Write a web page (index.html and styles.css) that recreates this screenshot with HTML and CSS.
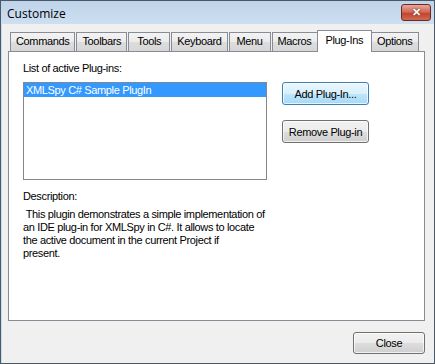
FILE: index.html
```html
<!DOCTYPE html>
<html lang="en">
<head>
  <meta charset="UTF-8">
  <title>Customize</title>
  <link rel="stylesheet" href="styles.css">
</head>
<body>
  <div class="window">
    <div class="titlebar">
      <span class="title">Customize</span>
      <button class="close-x">&#x2715;</button>
    </div>

    <div class="client">
      <div class="tabs">
        <div class="tab">Commands</div>
        <div class="tab">Toolbars</div>
        <div class="tab">Tools</div>
        <div class="tab">Keyboard</div>
        <div class="tab">Menu</div>
        <div class="tab">Macros</div>
        <div class="tab active">Plug-Ins</div>
        <div class="tab">Options</div>
      </div>

      <div class="panel">
        <div class="label">List of active Plug-ins:</div>
        <div class="row">
          <div class="listbox">
            <div class="item selected">XMLSpy C# Sample PlugIn</div>
          </div>
          <div class="side-buttons">
            <button class="btn default">Add Plug-In...</button>
            <button class="btn">Remove Plug-in</button>
          </div>
        </div>

        <div class="label desc-label">Description:</div>
        <div class="desc">&nbsp;This plugin demonstrates a simple implementation of an IDE plug-in for XMLSpy in C#. It allows to locate the active document in the current Project if<br>present.</div>
      </div>

      <div class="footer">
        <button class="btn close-btn">Close</button>
      </div>
    </div>
  </div>
</body>
</html>
```

FILE: styles.css
```css
* {
  box-sizing: border-box;
}

body {
  margin: 0;
  background-color: #ffffff;
  font-family: 'Liberation Sans', Arial, sans-serif;
  font-size: 11px;
  letter-spacing: -0.35px;
  color: #000000;
}

.window {
  width: 435px;
  height: 364px;
  border: 1px solid #4b5866;
  background-color: #c9dbee;
  display: flex;
  flex-direction: column;
}

.titlebar {
  height: 23px;
  display: flex;
  align-items: center;
  justify-content: space-between;
  padding: 0 3px 0 6px;
  background: linear-gradient(#bfd4ea, #cddff1);
}

.title {
  font-family: 'Open Sans', 'Noto Sans', sans-serif;
  font-size: 12px;
  letter-spacing: 0;
  margin-top: 2px;
}

.close-x {
  width: 30px;
  height: 17px;
  margin-top: -1px;
  border: 1px solid #6d2a22;
  border-radius: 3px;
  background: linear-gradient(#e9a99b, #d0634f 50%, #c0402c 51%, #d06b52);
  color: #ffffff;
  font-size: 11px;
  font-weight: bold;
  line-height: 13px;
  padding: 0;
  text-shadow: 0 0 2px #5a1a10;
}

.client {
  flex: 1;
  margin-left: 1px;
  background-color: #f0f0f0;
  padding: 6px 9px 0 6px;
  display: flex;
  flex-direction: column;
}

.tabs {
  display: flex;
  align-items: flex-end;
  height: 21px;
  padding-left: 2px;
  position: relative;
  z-index: 1;
}

.tab {
  height: 19px;
  min-width: 42px;
  padding: 2px 5px 0 5px;
  margin-right: 1px;
  border: 1px solid #898c95;
  border-bottom: none;
  background: linear-gradient(#f3f3f3, #ebebeb 50%, #dddddd 51%, #d6d6d6);
  text-align: center;
  white-space: nowrap;
}

.tab.active {
  height: 22px;
  margin: 0 -1px -1px -2px;
  padding: 3px 8px 0 8px;
  background: #ffffff;
}

.panel {
  height: 270px;
  border: 1px solid #898c95;
  background-color: #ffffff;
  padding: 10px 14px 0 14px;
}

.label {
  line-height: 13px;
  margin-bottom: 7px;
}

.row {
  display: flex;
  gap: 15px;
}

.listbox {
  width: 244px;
  height: 98px;
  border: 1px solid #828790;
  background-color: #ffffff;
}

.item {
  height: 14px;
  line-height: 14px;
  padding-left: 2px;
}

.item.selected {
  background-color: #3399ff;
  color: #ffffff;
}

.side-buttons {
  display: flex;
  flex-direction: column;
  gap: 15px;
}

.btn {
  width: 87px;
  height: 23px;
  border: 1px solid #707070;
  border-radius: 3px;
  background: linear-gradient(#f2f2f2, #ebebeb 50%, #dddddd 51%, #cfcfcf);
  font-family: 'Liberation Sans', Arial, sans-serif;
  font-size: 11px;
  letter-spacing: -0.35px;
  color: #000000;
  padding: 0;
  box-shadow: inset 0 0 0 1px rgba(255, 255, 255, 0.7);
}

.btn.default {
  border-color: #3c7fb1;
  background: linear-gradient(#eaf6fd, #d9f0fc 50%, #bee6fd 51%, #a7d9f5);
}

.desc-label {
  margin-top: 10px;
  margin-bottom: 5px;
}

.desc {
  width: 246px;
  line-height: 13px;
}

.footer {
  display: flex;
  justify-content: flex-end;
  padding-top: 11px;
}

.close-btn {
  width: 72px;
  height: 22px;
}
```
